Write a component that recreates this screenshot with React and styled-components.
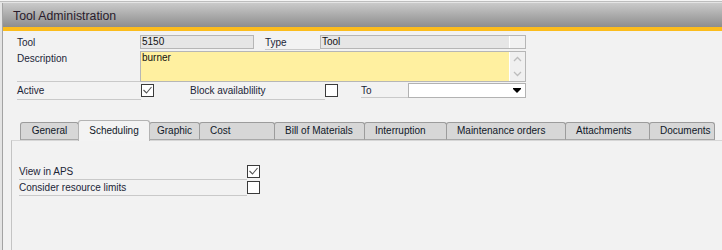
import React from "react";
import styled, { createGlobalStyle } from "styled-components";

const GlobalStyle = createGlobalStyle`
  html, body {
    margin: 0;
    padding: 0;
    background: #e4e4e4;
  }
  body {
    font-family: "Liberation Sans", Arial, sans-serif;
    font-size: 10px;
    color: #1b2537;
  }
  * {
    box-sizing: border-box;
  }
`;

const Frame = styled.div`
  background: #e4e4e4;
  box-shadow: inset 0 1px 0 #f4f4f4, inset 0 2px 0 #bdbdbd;
  display: flex;
  height: 250px;
  overflow: hidden;
  padding: 3px 0 0 2px;
  width: 722px;
`;

const Window = styled.div`
  background: #f2f2f2;
  border-left: 1px solid #a3a3a3;
  display: flex;
  flex: 1;
  flex-direction: column;
`;

const TitleBar = styled.div`
  align-items: center;
  background: linear-gradient(#cacaca, #8d8d8d);
  color: #2a1c2c;
  display: flex;
  font-size: 12.3px;
  height: 24px;
  padding: 2px 0 0 10px;
`;

const Accent = styled.div`
  background: #fbbc1c;
  height: 4px;
`;

const Form = styled.div`
  display: flex;
  flex-direction: column;
  gap: 1px;
  padding: 4px 0 0 14px;
`;

const Row = styled.div`
  align-items: flex-start;
  display: flex;
`;

const Label = styled.div`
  border-bottom: 1px solid ${(p) => (p.$plain ? "transparent" : "#c9c9c9")};
  height: ${(p) => p.$h}px;
  line-height: 15px;
  margin-left: ${(p) => p.$ml || 0}px;
  white-space: nowrap;
  width: ${(p) => p.$w}px;
`;

const Field = styled.div`
  background: ${(p) => p.$bg || "#e6e6e6"};
  border: 1px solid #b6b6b6;
  display: flex;
  height: ${(p) => p.$h || 14}px;
  width: ${(p) => p.$w}px;
`;

const FieldText = styled.div`
  color: #111;
  flex: 1;
  line-height: 12px;
  padding-left: 1px;
`;

const FieldEnd = styled.div`
  align-items: center;
  background: ${(p) => p.$bg || "#f1f1f1"};
  border-left: 1px solid #fff;
  display: flex;
  flex-direction: column;
  justify-content: space-around;
  width: 16px;
`;

const Box = styled.div`
  align-items: center;
  background: #fff;
  border: 1px solid #3b3b3b;
  display: flex;
  height: 13px;
  justify-content: center;
  margin-top: 1px;
  width: 13px;
`;

const Select = styled.div`
  align-items: center;
  background: #fff;
  border: 1px solid #b2b2b2;
  display: flex;
  height: 15px;
  justify-content: flex-end;
  padding-right: 4px;
  width: 118px;
`;

const TabArea = styled.div`
  display: flex;
  flex: 1;
  flex-direction: column;
  margin: 20px 0 0 8px;
`;

const TabStrip = styled.div`
  align-items: flex-end;
  display: flex;
  height: 20px;
  padding-left: 9px;
  position: relative;
  z-index: 1;
`;

const Tab = styled.div`
  background: ${(p) => (p.$active ? "#f3f3f3" : "#d7d7d7")};
  border: 1px solid ${(p) => (p.$active ? "#b3b3b3" : "#9c9c9c")};
  border-bottom: ${(p) => (p.$active ? "none" : "1px solid #a8a8a8")};
  border-radius: 3px 3px 0 0;
  color: #101828;
  height: ${(p) => (p.$active ? 21 : 18)}px;
  line-height: 16px;
  margin-bottom: ${(p) => (p.$active ? -1 : 0)}px;
  margin-left: ${(p) => (p.$first ? 0 : -1)}px;
  padding: ${(p) => (p.$active ? "2px" : "0")} 0 0
    ${(p) => (p.$center ? 0 : 10)}px;
  position: relative;
  text-align: ${(p) => (p.$center ? "center" : "left")};
  white-space: nowrap;
  width: ${(p) => p.$w}px;
  z-index: ${(p) => (p.$active ? 2 : 1)};
`;

const Panel = styled.div`
  border-left: 1px solid #c4c4c4;
  border-top: 1px solid #d6d6d6;
  display: flex;
  flex: 1;
  flex-direction: column;
  padding: 23px 0 0 7px;
`;

const Check = ({ checked }) => (
  <Box>
    {checked && (
      <svg width="11" height="11" viewBox="0 0 11 11">
        <polyline
          points="1.5,5 4.5,8 9.5,2"
          fill="none"
          stroke="#555"
          strokeWidth="1.1"
        />
      </svg>
    )}
  </Box>
);

const Chevron = ({ up }) => (
  <svg width="9" height="6" viewBox="0 0 9 6">
    <polyline
      points={up ? "1,5 4.5,1.5 8,5" : "1,1 4.5,4.5 8,1"}
      fill="none"
      stroke="#bdbdbd"
      strokeWidth="1.3"
    />
  </svg>
);

const tabs = [
  { name: "General", w: 59, center: true },
  { name: "Scheduling", w: 72, center: true, active: true },
  { name: "Graphic", w: 51, center: true },
  { name: "Cost", w: 76 },
  { name: "Bill of Materials", w: 91 },
  { name: "Interruption", w: 83 },
  { name: "Maintenance orders", w: 120 },
  { name: "Attachments", w: 85 },
  { name: "Documents", w: 66 },
];

export default function App() {
  return (
    <>
      <GlobalStyle />
      <Frame>
        <Window>
          <TitleBar>Tool Administration</TitleBar>
          <Accent />
          <Form>
            <Row>
              <Label $w={123} $h={15} $plain>
                Tool
              </Label>
              <Field $w={114}>
                <FieldText>5150</FieldText>
              </Field>
              <Label $w={55} $h={15} $ml={11}>
                Type
              </Label>
              <Field $w={206}>
                <FieldText>Tool</FieldText>
                <FieldEnd />
              </Field>
            </Row>
            <Row>
              <Label $w={123} $h={31}>
                Description
              </Label>
              <Field $w={386} $h={31} $bg="#fff0a0">
                <FieldText>burner</FieldText>
                <FieldEnd $bg="#f0f0f0">
                  <Chevron up />
                  <Chevron />
                </FieldEnd>
              </Field>
            </Row>
            <Row>
              <Label $w={124} $h={17}>
                Active
              </Label>
              <Check checked />
              <Label $w={135} $h={17} $ml={36}>
                Block availablility
              </Label>
              <Check />
              <Label $w={47} $h={15} $ml={23}>
                To
              </Label>
              <Select>
                <svg width="8" height="5" viewBox="0 0 8 5">
                  <path d="M0 0H8V1L4 5L0 1Z" fill="#000" />
                </svg>
              </Select>
            </Row>
          </Form>
          <TabArea>
            <TabStrip>
              {tabs.map((t, i) => (
                <Tab
                  key={t.name}
                  $w={t.w}
                  $center={t.center}
                  $active={t.active}
                  $first={i === 0}
                >
                  {t.name}
                </Tab>
              ))}
            </TabStrip>
            <Panel>
              <Row>
                <Label $w={228} $h={16}>
                  View in APS
                </Label>
                <Check checked />
              </Row>
              <Row>
                <Label $w={228} $h={16}>
                  Consider resource limits
                </Label>
                <Check />
              </Row>
            </Panel>
          </TabArea>
        </Window>
      </Frame>
    </>
  );
}
